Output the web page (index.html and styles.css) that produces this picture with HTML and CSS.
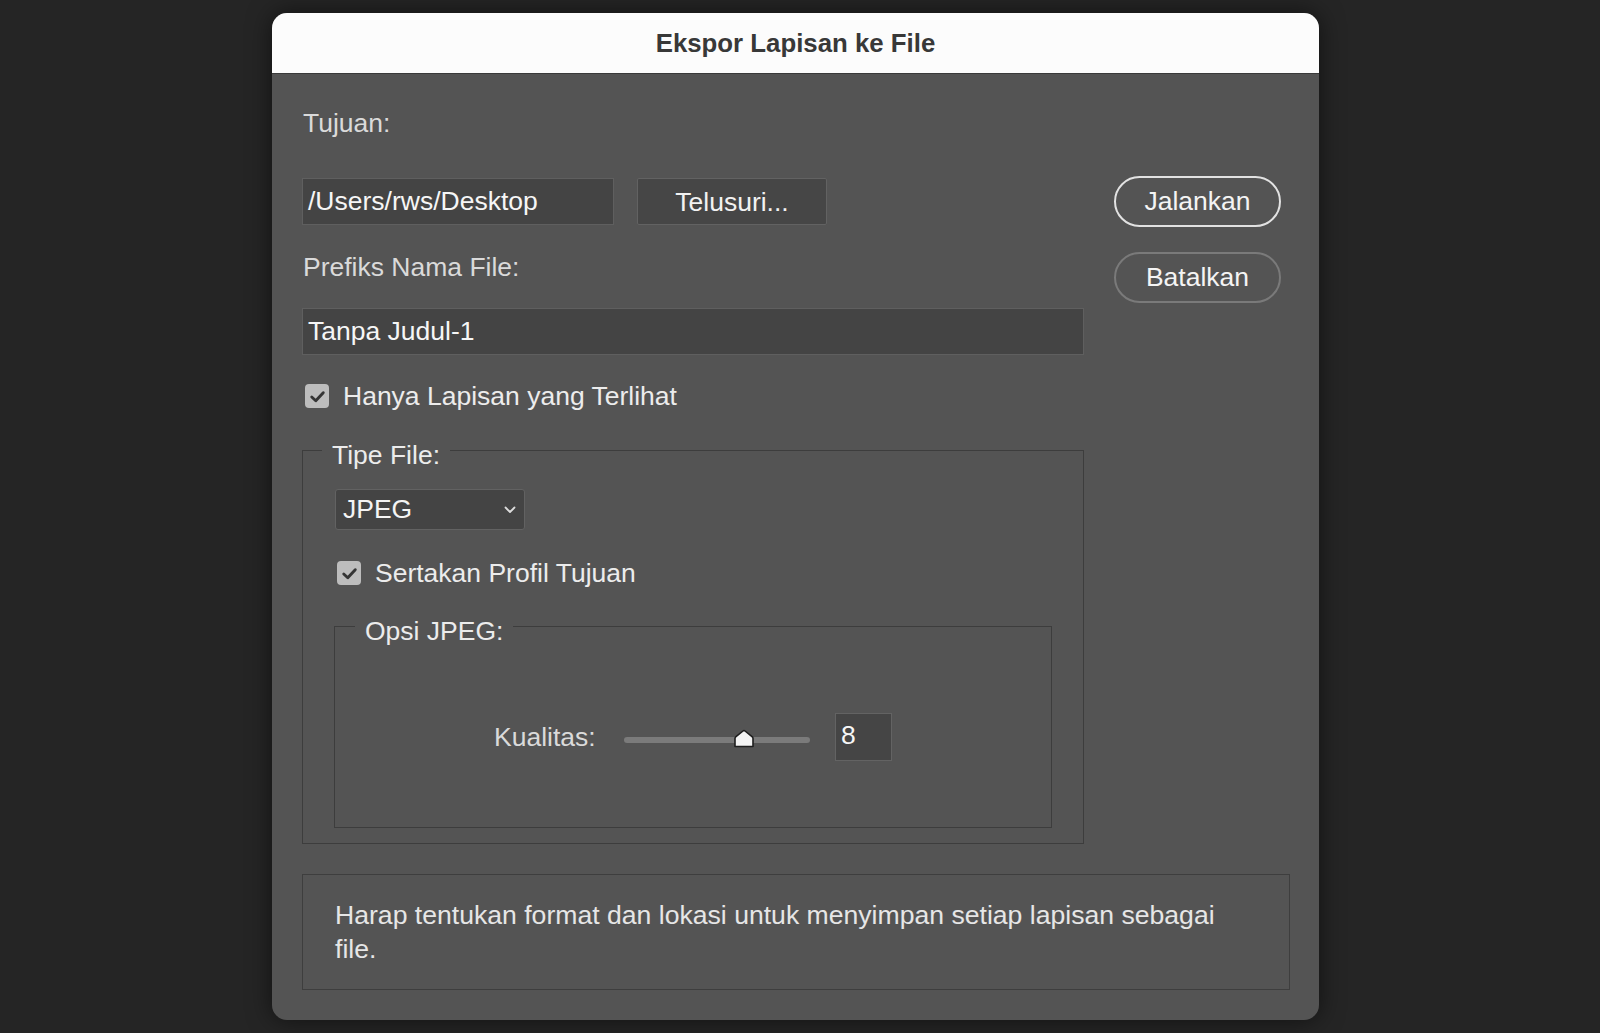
FILE: index.html
```html
<!DOCTYPE html>
<html lang="id">
<head>
<meta charset="utf-8">
<title>Ekspor Lapisan ke File</title>
<link rel="stylesheet" href="styles.css">
</head>
<body>
<div class="screen">
  <div class="dialog">
    <div class="titlebar">Ekspor Lapisan ke File</div>
    <div class="body">
      <div class="main">
        <div class="left">
          <div class="label lbl-tujuan">Tujuan:</div>
          <div class="path-row">
            <div class="field path">/Users/rws/Desktop</div>
            <div class="btn-rect">Telusuri...</div>
          </div>
          <div class="label lbl-prefix">Prefiks Nama File:</div>
          <div class="field prefix">Tanpa Judul-1</div>
          <div class="check check-visible">
            <span class="box"><svg viewBox="0 0 24 24" width="23" height="23"><path d="M6 12.5 L10.2 16.5 L18 8" fill="none" stroke="#353535" stroke-width="3" stroke-linecap="round" stroke-linejoin="round"/></svg></span>
            <span class="check-text">Hanya Lapisan yang Terlihat</span>
          </div>
          <fieldset class="group outer">
            <legend class="legend">Tipe File:</legend>
            <div class="select">
              <span>JPEG</span>
              <svg viewBox="0 0 12 8" width="12" height="8"><path d="M1.5 1.5 L6 6 L10.5 1.5" fill="none" stroke="#dcdcdc" stroke-width="1.8" stroke-linecap="round" stroke-linejoin="round"/></svg>
            </div>
            <div class="check check-profile">
              <span class="box"><svg viewBox="0 0 24 24" width="23" height="23"><path d="M6 12.5 L10.2 16.5 L18 8" fill="none" stroke="#353535" stroke-width="3" stroke-linecap="round" stroke-linejoin="round"/></svg></span>
              <span class="check-text">Sertakan Profil Tujuan</span>
            </div>
            <fieldset class="group inner">
              <legend class="legend inner-legend">Opsi JPEG:</legend>
              <div class="quality-row">
                <span class="quality-label">Kualitas:</span>
                <div class="slider">
                  <div class="track"></div>
                  <svg class="thumb" viewBox="0 0 22 19" width="22" height="19" style="left: 64.6%"><path d="M2 17.5 L2 9.5 Q2 8.5 3 7.7 L10 2 Q11 1.2 12 2 L19 7.7 Q20 8.5 20 9.5 L20 17.5 Z" fill="#f4f4f4" stroke="#1e1e1e" stroke-width="1.6" stroke-linejoin="round"/></svg>
                </div>
                <div class="field num">8</div>
              </div>
            </fieldset>
          </fieldset>
        </div>
        <div class="right">
          <div class="pill primary">Jalankan</div>
          <div class="pill secondary">Batalkan</div>
        </div>
      </div>
      <div class="info"><p class="info-text">Harap tentukan format dan lokasi untuk menyimpan setiap lapisan sebagai file.</p></div>
    </div>
  </div>
</div>
</body>
</html>
```

FILE: styles.css
```css
* { box-sizing: border-box; }

html, body {
  margin: 0;
  padding: 0;
  background: #252525;
}

body {
  font-family: "Liberation Sans", Arial, sans-serif;
  font-size: 26.5px;
  color: #ececec;
  width: 1600px;
  height: 1033px;
  overflow: hidden;
}

.screen {
  padding: 13px 0 0 272px;
}

.dialog {
  width: 1047px;
  height: 1007px;
  background: #545454;
  border-radius: 15px;
  overflow: hidden;
  box-shadow: 0 0 24px rgba(0, 0, 0, 0.55);
  display: flex;
  flex-direction: column;
}

.titlebar {
  height: 61px;
  flex: none;
  background: #fcfcfc;
  border-bottom: 1px solid #3a3a3a;
  color: #383838;
  font-weight: bold;
  font-size: 25.8px;
  display: flex;
  align-items: center;
  justify-content: center;
  padding-top: 1px;
}

.body {
  flex: 1;
  padding: 34px 29px 0 30px;
  display: flex;
  flex-direction: column;
}

.main {
  display: grid;
  grid-template-columns: 782px 167px;
  column-gap: 30px;
  align-items: start;
}

.left {
  display: flex;
  flex-direction: column;
  align-items: flex-start;
}

.label {
  height: 30px;
  line-height: 30px;
  color: #dadada;
  padding-left: 1px;
}

.path-row {
  margin-top: 40px;
  display: flex;
  gap: 23px;
}

.field {
  background: #444444;
  border: 1px solid #5f5f5f;
  color: #f6f6f6;
  height: 47px;
  line-height: 44px;
  padding-left: 5px;
  white-space: nowrap;
}

.path {
  width: 312px;
}

.btn-rect {
  width: 190px;
  height: 47px;
  line-height: 46px;
  background: #464646;
  border: 1px solid #626262;
  border-radius: 2px;
  text-align: center;
  color: #f2f2f2;
}

.lbl-prefix {
  margin-top: 27px;
}

.prefix {
  margin-top: 26px;
  width: 782px;
}

.check {
  display: flex;
  align-items: center;
  height: 30px;
}

.check-visible {
  margin-top: 26px;
  margin-left: 3px;
}

.box {
  width: 24px;
  height: 24px;
  border-radius: 4px;
  background: #bdbdbd;
  display: flex;
  align-items: center;
  justify-content: center;
  flex: none;
}

.check-text {
  margin-left: 14px;
  color: #ececec;
}

.group {
  margin: 0;
  border: 1px solid #3d3d3d;
  min-width: 0;
}

.outer {
  margin-top: 19px;
  width: 782px;
  padding: 19px 31px 15px 31px;
}

.legend {
  padding: 10px 10px 0 10px;
  margin-left: -12px;
  height: 40px;
  line-height: 30px;
  color: #ececec;
}

.select {
  margin-left: 1px;
  width: 190px;
  height: 41px;
  background: #444444;
  border: 1px solid #626262;
  border-radius: 3px;
  display: flex;
  align-items: center;
  justify-content: space-between;
  padding: 0 8px 0 7px;
  color: #f4f4f4;
}

.check-profile {
  margin-top: 28px;
  margin-left: 3px;
}

.inner {
  margin-top: 18px;
  width: 718px;
  padding: 67px 0 66px 0;
}

.inner-legend {
  margin-left: 20px;
}

.quality-row {
  display: flex;
  align-items: center;
  padding-left: 159px;
  height: 48px;
}

.quality-label {
  color: #dadada;
  width: 99px;
  white-space: nowrap;
}

.slider {
  position: relative;
  width: 186px;
  height: 20px;
  margin-left: 31px;
  margin-top: 4px;
}

.track {
  position: absolute;
  left: 0;
  right: 0;
  top: 8px;
  height: 6px;
  border-radius: 3px;
  background: #7b7b7b;
}

.thumb {
  position: absolute;
  top: 0;
  margin-left: -11px;
}

.num {
  margin-left: 25px;
  width: 57px;
  height: 48px;
  line-height: 42px;
  padding-left: 5px;
  background: #454545;
  border: 1px solid #636363;
}

.right {
  margin-top: 68px;
  display: flex;
  flex-direction: column;
  gap: 25px;
}

.pill {
  height: 51px;
  border-radius: 26px;
  display: flex;
  align-items: center;
  justify-content: center;
  color: #f4f4f4;
}

.primary {
  border: 2px solid #e2e2e2;
}

.secondary {
  border: 2px solid #7a7a7a;
}

.info {
  margin-top: 30px;
  height: 116px;
  border: 1px solid #3e3e3e;
  padding: 23px 20px 23px 32px;
}

.info-text {
  margin: 0;
  max-width: 905px;
  font-size: 26.6px;
  line-height: 34px;
  color: #e6e6e6;
}
```
